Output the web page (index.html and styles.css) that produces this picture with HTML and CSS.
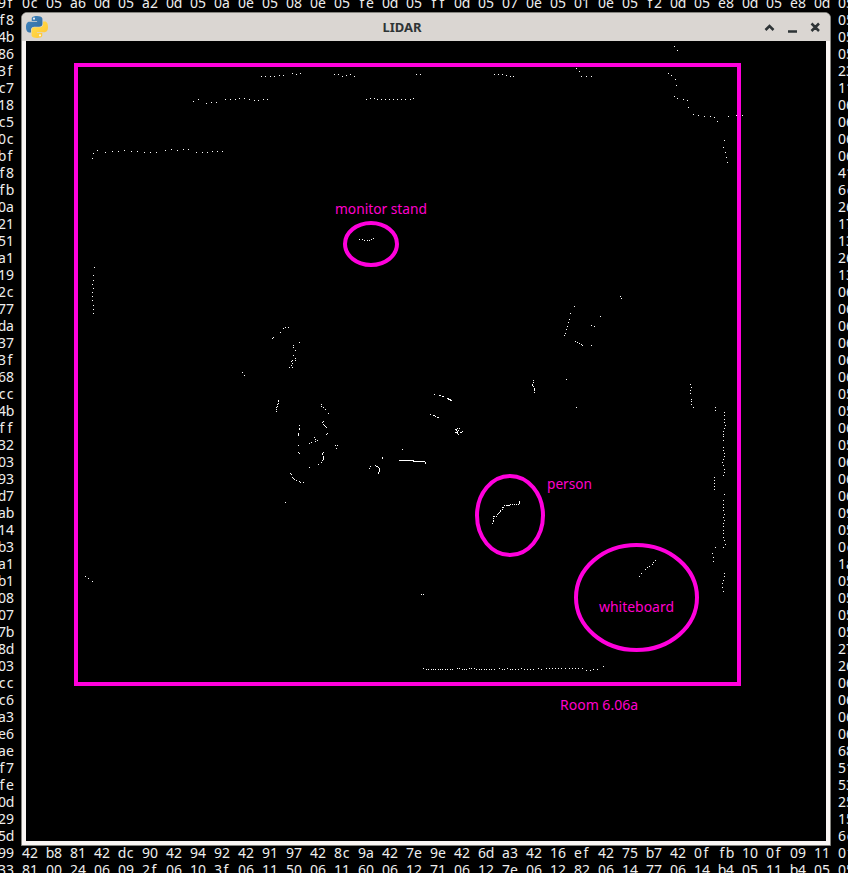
FILE: index.html
```html
<!DOCTYPE html>
<html lang="en">
<head>
<meta charset="utf-8">
<title>LIDAR</title>
<link rel="stylesheet" href="styles.css">
</head>
<body>
<main class="terminal">
  <div class="hex-row" data-hex="9f 0c 05 a6 0d 05 a2 0d 05 0a 0e 05 08 0e 05 fe 0d 05 ff 0d 05 07 0e 05 01 0e 05 f2 0d 05 e8 0d 05 e8 0d 05"></div>
  <div class="middle">
    <div class="hex-column" data-hex="f8 4b 86 3f c7 18 c5 0c bf f8 fb 0a 21 51 a1 19 2c 77 da 37 3f 68 cc 4b ff 32 03 93 d7 ab 14 b3 a1 b1 08 07 7b 8d 03 cc c6 a3 e6 ae f7 fe 0d 29 5d"></div>
    <section class="window">
      <header class="titlebar">
        <svg class="python" viewBox="0 0 110 110" aria-hidden="true">
          <defs>
            <linearGradient id="blue" x1="0" y1="0" x2="1" y2="1"><stop offset="0" stop-color="#4389c2"/><stop offset="1" stop-color="#30699c"/></linearGradient>
            <linearGradient id="yellow" x1="0" y1="0" x2="1" y2="1"><stop offset="0" stop-color="#ffe052"/><stop offset="1" stop-color="#ffc331"/></linearGradient>
          </defs>
          <path fill="url(#blue)" d="M54.900 0C27 0 28.700 12.200 28.700 12.200V25H55.400V29H18S0 27 0 55 16 82 16 82H25V69S25 53.500 41 53.500H67.500S82 53.500 82 39V15S84 0 54.900 0Z"/>
          <path fill="url(#yellow)" d="M55.100 110C83 110 81.300 97.800 81.300 97.800V85H54.600V81H92S110 83 110 55 94 28 94 28H85V41S85 56.500 69 56.500H42.500S28 56.500 28 71V95S26 110 55.100 110Z"/>
          <circle cx="40" cy="13.500" r="5.500" fill="#e7edf1"/>
          <circle cx="70" cy="96.500" r="5.500" fill="#fff8df"/>
        </svg>
        <h1 class="title">LIDAR</h1>
        <svg class="controls" viewBox="0 0 60 16" aria-hidden="true">
          <path d="M5.500 11 9.500 7 13.500 11M28 12.500H37M51.500 4.500 59 12M59 4.500 51.500 12"/>
        </svg>
      </header>
      <svg class="scan" viewBox="26 41 800 800">
        <path id="points" class="points"/>
        <g class="notes">
          <rect x="76" y="65" width="663" height="619"/>
          <ellipse cx="371" cy="244" rx="26" ry="21"/>
          <ellipse cx="510" cy="515.500" rx="33" ry="39.500"/>
          <ellipse cx="636.500" cy="597.500" rx="60.500" ry="52.500"/>
        </g>
        <g class="labels">
          <text x="335" y="214" textLength="92" lengthAdjust="spacingAndGlyphs">monitor stand</text>
          <text x="547" y="489" textLength="45" lengthAdjust="spacingAndGlyphs">person</text>
          <text x="599" y="612" textLength="75" lengthAdjust="spacingAndGlyphs">whiteboard</text>
          <text x="560" y="710" textLength="78" lengthAdjust="spacingAndGlyphs">Room 6.06a</text>
        </g>
      </svg>
    </section>
    <div class="hex-column" data-hex="05 05 05 23 11 06 06 06 06 41 6c 26 17 13 26 13 06 06 06 06 06 06 05 05 06 05 06 06 06 09 05 0c 1a 05 05 05 05 27 26 06 06 06 06 68 51 53 25 15 6c"></div>
  </div>
  <div class="hex-row" data-hex="99 42 b8 81 42 dc 90 42 94 92 42 91 97 42 8c 9a 42 7e 9e 42 6d a3 42 16 ef 42 75 b7 42 0f fb 10 0f 09 11 0f"></div>
  <div class="hex-row" data-hex="33 81 00 24 06 09 2f 06 10 3f 06 11 50 06 11 60 06 12 71 06 12 7e 06 12 82 06 14 77 06 14 b4 05 11 b4 05 05"></div>
</main>
<script src="script.js"></script>
</body>
</html>
```

FILE: styles.css
```css
* { box-sizing: border-box; }
body { margin: 0; background: #000; overflow: hidden; }
.terminal {
  width: 848px;
  height: 878px;
  margin-top: -5px;
  overflow: hidden;
  background: #000;
  color: #eee;
  font: 14px/15px "Noto Sans", sans-serif;
}
.hex-row { display: flex; height: 17px; margin-left: -2px; width: 864px; }
.byte { display: flex; flex: none; width: 24px; height: 17px; }
.char { width: 8px; display: flex; justify-content: center; }
.middle { display: flex; height: 833px; }
.hex-column { width: 21px; flex: none; overflow: hidden; }
.hex-column:first-child .byte { margin-left: -2px; }
.hex-column:last-child { width: 17px; padding-left: 7px; }
.window {
  width: 810px;
  height: 834px;
  flex: none;
  border: 1px solid #858580;
  border-radius: 6px 6px 0 0;
  background: #faf6f4;
  overflow: hidden;
}
.titlebar {
  display: flex;
  align-items: center;
  height: 28px;
  padding: 0 10px 0 4px;
  background: #dad6d2;
}
.python { width: 22px; height: 22px; }
.title {
  flex: 1;
  margin: 0;
  padding-right: 4px;
  text-align: center;
  color: #2e3436;
  font: bold 13px/28px "Noto Sans", sans-serif;
}
.controls { width: 60px; height: 16px; fill: none; stroke: #2e3436; stroke-width: 2.5; }
.scan { display: block; width: 800px; height: 800px; margin-left: 4px; background: #000; }
.points { fill: #fff; shape-rendering: crispEdges; }
.notes { fill: none; stroke: #ff00dc; stroke-width: 4; }
.labels { fill: #f0c; font: 14.5px "Noto Sans", sans-serif; }
```

FILE: script.js
```js
// Each byte is laid out on the terminal's 8px character grid.
document.querySelectorAll("[data-hex]").forEach(function (line) {
  line.dataset.hex.split(" ").forEach(function (hex) {
    const byte = document.createElement("span");
    byte.className = "byte";
    for (const digit of hex) {
      const char = document.createElement("span");
      char.className = "char";
      char.textContent = digit;
      byte.append(char);
    }
    line.append(byte);
  });
});

// Scan returns: x,y with an optional width and height.
const scan = `
261,76 265,76 270,76 274,76 279,75 283,75 292,73 296,74 300,73 334,74 338,74 342,76 346,75 350,74 354,76 416,74 420,74
193,101 198,99 206,103 211,102 216,102 225,99 230,99 235,99 239,98 244,98 249,99 254,100 258,100 263,99 267,99
366,99 370,98 374,98 377,99 381,99 385,99 389,99 393,99 397,99 401,99 405,99 410,99 413,98
674,46 677,50 494,74 498,74 502,74 506,75 510,76 513,76 576,68 579,71 581,76 586,76 591,76
668,73 671,75 675,79 676,85 674,96 677,98 683,99 687,100 688,107 693,114 698,115 704,116 710,116 714,117 717,121 728,116 736,115 742,115 724,140 723,147 725,152 726,157 727,162
97,150 93,153 92,158 105,152 112,151 118,151 124,150 131,151 137,151 144,152 150,152 156,152 165,150 171,149 177,150 183,149 188,149 196,152 202,152 207,152 212,151 217,151 222,151
94,267 93,275 93,280 92,284 93,288 92,292 92,296 92,300 93,305 93,309 93,313
288,327 285,327 283,328 280,332 273,337 272,338 299,342 293,345 293,347 295,350 293,355 295,358 295,360 292,360 291,361 292,363 291,365 289,367 292,367 242,372 244,375
278,400,1,2 278,403 277,404 277,406 276,407 276,409 276,411 321,404 321,406 323,407 325,409 328,413 323,421 322,422 323,424 324,425 325,426 326,427 327,433 326,434
299,425 299,428,1,2 298,433,1,3 298,445 298,452 299,453 314,437 315,439 317,440 315,441 311,442 309,443 335,445 337,445 336,448
323,452 322,453,1,2 323,456,1,4 322,460 321,462 318,464 309,467 290,473 291,474 292,477 293,478 294,479 296,480 299,481 300,482 303,482 285,502
434,394 439,395,2 442,396,2 447,398,2 448,399,3 450,400,2 430,414 433,415,2 435,416 437,417,2
457,428 459,428 455,429,2 456,430 458,430 457,431 455,432,3 462,431 460,432,2 457,433 458,434
402,449 382,457,1,2 370,466 369,468 375,465 376,466,2 378,467 379,468,1,4 378,472,1,2 399,460,15 413,461,12 425,462,1,2
574,306 570,313 569,319 568,322 567,326 566,329 565,333 564,335 575,341 577,342 579,343 581,344 582,345 591,345 591,325 594,326 600,316 620,296 621,298
533,380 533,382 532,384,1,2 533,386 534,388,1,3 534,392 566,379 576,407 690,384 691,387 690,390 690,393 691,399 691,401 691,404 693,407 715,407 715,410
724,412 724,415 724,419 724,422 725,425 724,428 723,431 723,434 723,436 723,440 723,447 723,450 724,453 724,456 723,459 722,462 723,465 724,469 724,472 723,475
714,477 714,480 714,483 714,486 714,489 724,494 723,500 723,504 723,507 723,510 724,514 723,517 724,520 723,523 723,526 723,530 723,533 723,537 724,540 725,544 723,547
715,547 712,553 713,557 713,561 724,573 724,576 723,580 722,583 722,587 723,591
519,501,1,2 519,503 510,504 512,504 514,504 516,504 518,504 506,505,4 504,505 503,507 502,507 502,509 500,510 500,511 499,512 498,513 497,514 496,516 493,516,2 493,518 493,520,1,2 492,523
655,560 653,562 652,564 649,566 647,567 645,569 641,573 639,576 421,594 423,594 85,576 88,578 92,581
359,239 362,239 364,240 367,240 369,240 371,239 373,238`;
const points = scan.trim().split(/\s+/).map(function (entry) {
  return entry.split(",").map(Number);
});

// The far wall, as horizontal offsets in thirds of a pixel for each row.
const wall = {
  668: [70, 172, 178, 208, 214, 222, 298, 322, 364, 415, 439, 448, 457, 466, 475, 484, 496, 508, 517, 526, 535, 547],
  669: [79, 85, 94, 100, 106, 115, 121, 127, 136, 142, 151, 157, 187, 193, 199, 229, 238, 244, 253, 259, 268, 274, 283, 307, 313, 331, 337, 346, 355, 373, 382, 391, 400, 424, 580, 592],
  670: [559, 571],
  666: [610]
};
for (const y in wall) {
  for (const x of wall[y]) points.push([400 + Math.floor(x / 3), Number(y)]);
}
document.getElementById("points").setAttribute("d", points.map(function ([x, y, w = 1, h = 1]) {
  return `M${x} ${y}h${w}v${h}h${-w}z`;
}).join(""));
```
